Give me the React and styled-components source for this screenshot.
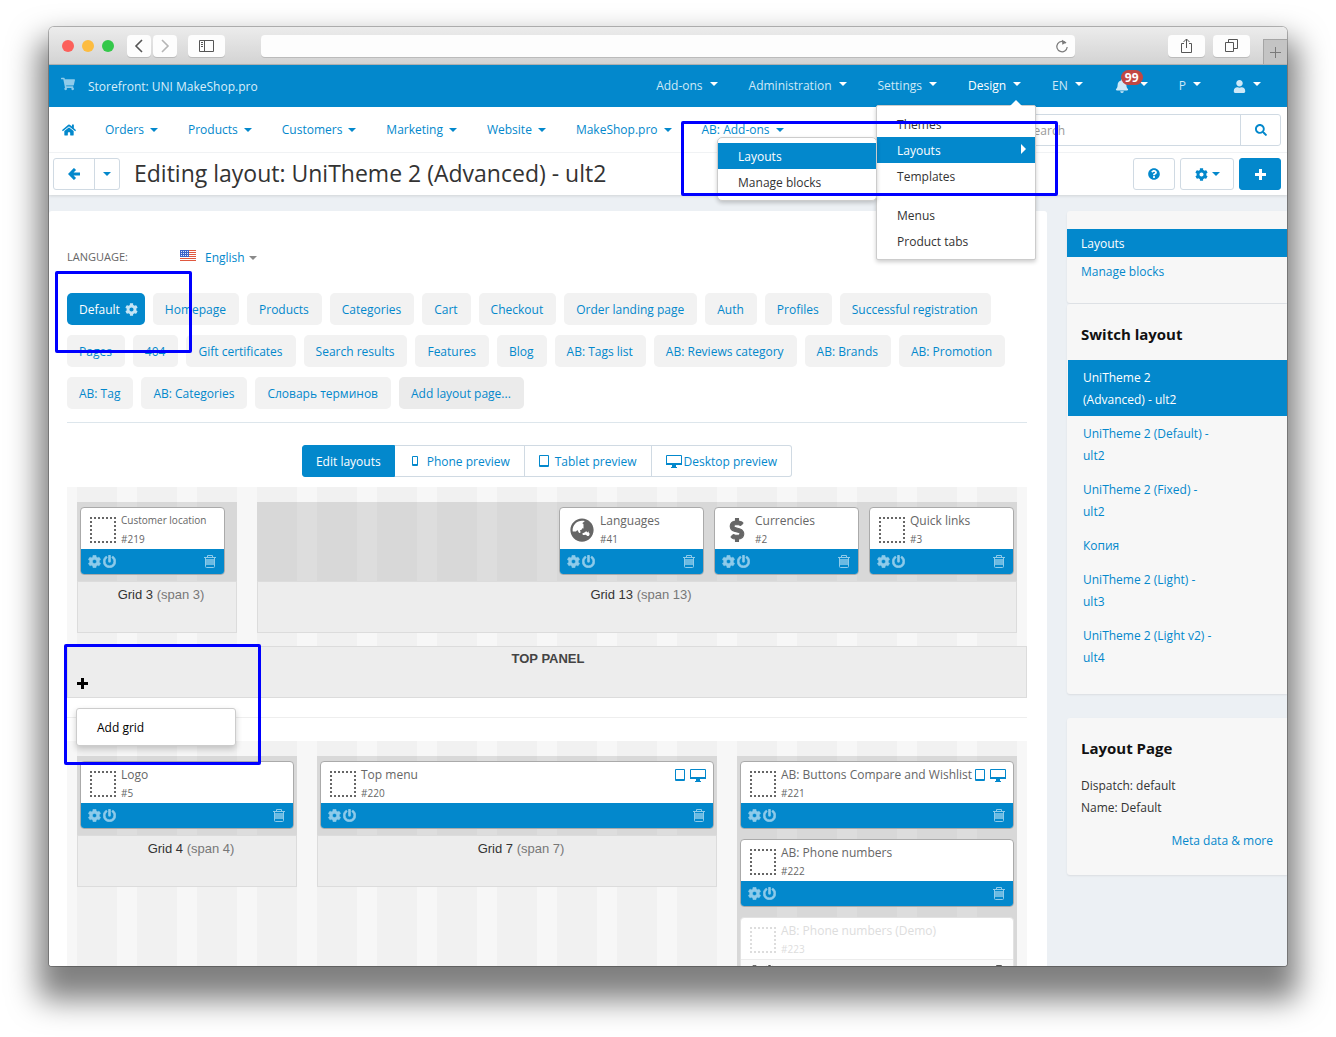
import React from 'react';
import styled, { createGlobalStyle } from 'styled-components';
import {
  FaHome,
  FaShoppingCart,
  FaBell,
  FaUser,
  FaSearch,
  FaQuestionCircle,
  FaCog,
  FaPowerOff,
  FaGlobeAsia,
  FaDollarSign,
} from 'react-icons/fa';

const topMenu = ['Add-ons', 'Administration', 'Settings'];

const mainMenu = [
  'Orders',
  'Products',
  'Customers',
  'Marketing',
  'Website',
  'MakeShop.pro',
  'AB: Add-ons',
];

const layoutPages = [
  'Homepage',
  'Products',
  'Categories',
  'Cart',
  'Checkout',
  'Order landing page',
  'Auth',
  'Profiles',
  'Successful registration',
  'Pages',
  '404',
  'Gift certificates',
  'Search results',
  'Features',
  'Blog',
  'AB: Tags list',
  'AB: Reviews category',
  'AB: Brands',
  'AB: Promotion',
  'AB: Tag',
  'AB: Categories',
  'Словарь терминов',
];

const themes = [
  'UniTheme 2 (Advanced) - ult2',
  'UniTheme 2 (Default) - ult2',
  'UniTheme 2 (Fixed) - ult2',
  'Копия',
  'UniTheme 2 (Light) - ult3',
  'UniTheme 2 (Light v2) - ult4',
];

const topPanelGrids = [
  {
    span: 3,
    footer: true,
    blocks: [{ id: 219, name: 'Customer location', small: true }],
  },
  {
    span: 13,
    footer: true,
    alignRight: true,
    blocks: [
      { id: 41, name: 'Languages', icon: 'globe' },
      { id: 2, name: 'Currencies', icon: 'dollar' },
      { id: 3, name: 'Quick links' },
    ],
  },
];

const headerGrids = [
  { span: 4, footer: true, stacked: true, blocks: [{ id: 5, name: 'Logo' }] },
  {
    span: 7,
    footer: true,
    stacked: true,
    blocks: [{ id: 220, name: 'Top menu', devices: true }],
  },
  {
    span: 5,
    stacked: true,
    blocks: [
      { id: 221, name: 'AB: Buttons Compare and Wishlist', devices: true },
      { id: 222, name: 'AB: Phone numbers' },
      { id: 223, name: 'AB: Phone numbers (Demo)', disabled: true },
    ],
  },
];

export default function App() {
  return (
    <>
      <GlobalStyle />
      <Page>
        <Window>
          <BrowserBar />
          <Header />
          <Body>
            <Content>
              <LanguageSelect />
              <LayoutTabs />
              <Previews />
              <Grids grids={topPanelGrids} />
              <TopPanel />
              <Grids grids={headerGrids} last />
            </Content>
            <Sidebar />
          </Body>
        </Window>
      </Page>
    </>
  );
}

function BrowserBar() {
  return (
    <Chrome>
      <Dots>
        <Dot $color="#fc605b" />
        <Dot $color="#fdbc40" />
        <Dot $color="#34c84a" />
      </Dots>
      <ChromeGroup>
        <ChromeButton $width={24} aria-label="Back">
          <svg width="10" height="14" viewBox="0 0 10 14" fill="none" stroke="#555" strokeWidth="1.6">
            <path d="M8 1 2 7l6 6" />
          </svg>
        </ChromeButton>
        <ChromeButton $width={24} aria-label="Forward">
          <svg width="10" height="14" viewBox="0 0 10 14" fill="none" stroke="#b5b5b5" strokeWidth="1.6">
            <path d="m2 1 6 6-6 6" />
          </svg>
        </ChromeButton>
      </ChromeGroup>
      <ChromeButton $width={37} aria-label="Sidebar">
        <svg width="15" height="12" viewBox="0 0 15 12" fill="none" stroke="#555">
          <path d="M.5.5h14v11H.5zM5.5.5v11M2 2.5h2M2 4.5h2M2 6.5h2" />
        </svg>
      </ChromeButton>
      <Address>
        <AddressInput aria-label="Address" />
        <svg width="14" height="14" viewBox="0 0 14 14" fill="none" stroke="#7a7a7a" strokeWidth="1.2">
          <path d="M11 4.2A5.2 5.2 0 1 0 12.2 8" />
          <path d="M7 .8 11.4 3.6 7.3 5.8z" fill="#7a7a7a" stroke="none" />
        </svg>
      </Address>
      <ChromeGroup $gap={8}>
        <ChromeButton $width={37} aria-label="Share">
          <svg width="13" height="16" viewBox="0 0 13 16" fill="none" stroke="#555">
            <path d="M4 5.5H1.5v9h10v-9H9M6.5 10V1M3.5 4l3-3 3 3" />
          </svg>
        </ChromeButton>
        <ChromeButton $width={37} aria-label="Tabs">
          <svg width="13" height="13" viewBox="0 0 13 13" fill="none" stroke="#555">
            <path d="M.5 3.5h8v9h-8zM3.5 3.5v-3h9v9h-4" />
          </svg>
        </ChromeButton>
      </ChromeGroup>
      <NewTab aria-label="New tab">
        <svg width="11" height="11" viewBox="0 0 11 11" stroke="#7a7a7a">
          <path d="M5.5 0v11M0 5.5h11" />
        </svg>
      </NewTab>
    </Chrome>
  );
}

function Header() {
  return (
    <Top>
      <AdminBar>
        <Storefront href="#storefront">
          <FaShoppingCart size={14} />
          <span>Storefront: UNI MakeShop.pro</span>
        </Storefront>
        <AdminNav>
          {topMenu.map((name) => (
            <AdminItem key={name}>
              {name}
              <Caret />
            </AdminItem>
          ))}
          <DropdownHolder>
            <AdminItem $active>
              Design
              <Caret />
            </AdminItem>
            <DesignMenu />
          </DropdownHolder>
          <AdminItem>
            EN
            <Caret />
          </AdminItem>
          <AdminItem $icon aria-label="Notifications">
            <Bell>
              <FaBell size={14} />
              <Badge>99</Badge>
            </Bell>
            <Caret />
          </AdminItem>
          <AdminItem>
            P
            <Caret />
          </AdminItem>
          <AdminItem $icon aria-label="Account">
            <FaUser size={13} />
            <Caret />
          </AdminItem>
        </AdminNav>
      </AdminBar>
      <MainBar>
        <HomeLink href="#home" aria-label="Home">
          <FaHome size={14} />
        </HomeLink>
        <MainNav>
          {mainMenu.map((name) => (
            <MainItem key={name}>
              {name}
              <Caret />
            </MainItem>
          ))}
        </MainNav>
        <SearchForm>
          <SearchInput type="text" placeholder="Search" aria-label="Search" />
          <SearchButton type="button" aria-label="Find">
            <FaSearch size={12} />
          </SearchButton>
        </SearchForm>
      </MainBar>
      <TitleBar>
        <BackGroup>
          <BackButton aria-label="Back">
            <svg width="12" height="12" viewBox="0 0 12 12" fill="none" stroke="currentColor" strokeWidth="3">
              <path d="M7 1 2 6l5 5M2 6h10" />
            </svg>
          </BackButton>
          <BackMore aria-label="Last viewed">
            <Caret $flush />
          </BackMore>
        </BackGroup>
        <Title>Editing layout: UniTheme 2 (Advanced) - ult2</Title>
        <ToolButton aria-label="Help">
          <FaQuestionCircle size={12} />
        </ToolButton>
        <ToolButton $wide aria-label="Settings">
          <FaCog size={13} />
          <Caret $tight />
        </ToolButton>
        <ToolButton $primary aria-label="Add">
          <PlusIcon />
        </ToolButton>
      </TitleBar>
      <Highlight $top={56} $right={229} $width={377} $height={75} />
    </Top>
  );
}

function PlusIcon() {
  return (
    <svg width="11" height="11" viewBox="0 0 11 11" fill="none" stroke="currentColor" strokeWidth="3">
      <path d="M5.5 0v11M0 5.5h11" />
    </svg>
  );
}

function DesignMenu() {
  return (
    <Menu>
      <Arrow />
      <MenuLink href="#themes">Themes</MenuLink>
      <SubmenuHolder>
        <MenuLink href="#layouts" $active>
          Layouts
          <ArrowRight />
        </MenuLink>
        <Submenu>
          <MenuLink href="#layouts" $active>
            Layouts
          </MenuLink>
          <MenuLink href="#blocks">Manage blocks</MenuLink>
        </Submenu>
      </SubmenuHolder>
      <MenuLink href="#templates">Templates</MenuLink>
      <MenuGap />
      <MenuLink href="#menus">Menus</MenuLink>
      <MenuLink href="#tabs">Product tabs</MenuLink>
    </Menu>
  );
}

function LanguageSelect() {
  return (
    <LanguageRow>
      <LanguageLabel id="language">Language:</LanguageLabel>
      <LanguageButton aria-labelledby="language">
        <Flag />
        English
        <Caret $tight $grey />
      </LanguageButton>
    </LanguageRow>
  );
}

function Flag() {
  return (
    <svg width="16" height="11" viewBox="0 0 16 11">
      <rect width="16" height="11" fill="#fff" />
      <path d="M0 .5h16M0 2.5h16M0 4.5h16M0 6.5h16M0 8.5h16M0 10.5h16" stroke="#e0583f" />
      <rect width="9" height="7" fill="#3b62c8" />
      <path d="M1 1.5h7M1 3.5h7M1 5.5h7" stroke="#dfe7fa" strokeDasharray="1 1" />
    </svg>
  );
}

function LayoutTabs() {
  return (
    <Tabs>
      <Tab href="#default" $active>
        Default
        <FaCog size={13} />
      </Tab>
      {layoutPages.map((name) => (
        <Tab key={name} href="#page">
          {name}
        </Tab>
      ))}
      <Tab href="#add" $add>
        Add layout page...
      </Tab>
      <Highlight $top={-22} $left={-12} $width={137} $height={82} />
    </Tabs>
  );
}

function Previews() {
  return (
    <PreviewRow>
      <Preview $active>Edit layouts</Preview>
      <Preview>
        <DeviceIcon type="phone" />
        Phone preview
      </Preview>
      <Preview>
        <DeviceIcon type="tablet" />
        Tablet preview
      </Preview>
      <Preview $close>
        <DeviceIcon type="desktop" />
        Desktop preview
      </Preview>
    </PreviewRow>
  );
}

function DeviceIcon({ type }) {
  if (type === 'desktop') {
    return (
      <svg width="16" height="13" viewBox="0 0 16 13" fill="#0388cc">
        <path d="M1 0h14a1 1 0 0 1 1 1v9H0V1a1 1 0 0 1 1-1zm0 1v7h14V1z" fillRule="evenodd" />
        <path d="M6 10h4v2h1v1H5v-1h1z" />
      </svg>
    );
  }
  if (type === 'tablet') {
    return (
      <svg width="10" height="12" viewBox="0 0 10 12" fill="#0388cc">
        <path d="M1 0h8a1 1 0 0 1 1 1v10a1 1 0 0 1-1 1H1a1 1 0 0 1-1-1V1a1 1 0 0 1 1-1zm0 1v9h8V1z" fillRule="evenodd" />
      </svg>
    );
  }
  return (
    <svg width="12" height="10" viewBox="0 0 12 10" fill="#0388cc">
      <path d="M4 0h4a1 1 0 0 1 1 1v8a1 1 0 0 1-1 1H4a1 1 0 0 1-1-1V1a1 1 0 0 1 1-1zm0 1v7h4V1z" fillRule="evenodd" />
    </svg>
  );
}

function Grids({ grids, last }) {
  return (
    <GridContainer $last={last}>
      {grids.map((grid) => (
        <Grid key={grid.span} $span={grid.span}>
          <GridBlocks $stacked={grid.stacked} $right={grid.alignRight}>
            {grid.blocks.map((block) => (
              <GridBlock key={block.id} block={block} stacked={grid.stacked} />
            ))}
          </GridBlocks>
          {grid.footer && (
            <GridFooter>
              Grid {grid.span} <span>(span {grid.span})</span>
            </GridFooter>
          )}
        </Grid>
      ))}
    </GridContainer>
  );
}

function BlockIcon({ icon }) {
  if (icon === 'globe') return <FaGlobeAsia size={24} />;
  if (icon === 'dollar') return <FaDollarSign size={24} stroke="currentColor" strokeWidth={24} />;
  return <EmptyIcon />;
}

function GridBlock({ block, stacked }) {
  return (
    <Block $stacked={stacked} $disabled={block.disabled}>
      <BlockHead>
        <BlockPicture>
          <BlockIcon icon={block.icon} />
        </BlockPicture>
        <BlockText>
          <BlockName $small={block.small}>{block.name}</BlockName>
          <BlockId>#{block.id}</BlockId>
        </BlockText>
        {block.devices && (
          <Devices>
            <DeviceIcon type="tablet" />
            <DeviceIcon type="desktop" />
          </Devices>
        )}
      </BlockHead>
      <BlockActions $disabled={block.disabled}>
        <ActionButton aria-label="Settings">
          <FaCog size={13} stroke="currentColor" strokeWidth={20} />
        </ActionButton>
        <ActionButton aria-label="Turn off">
          <FaPowerOff size={13} stroke="currentColor" strokeWidth={24} />
        </ActionButton>
        <ActionButton $end aria-label="Delete">
          <TrashIcon />
        </ActionButton>
      </BlockActions>
    </Block>
  );
}

function TrashIcon() {
  return (
    <svg width="12" height="13" viewBox="0 0 12 13" fill="none" stroke="currentColor">
      <path d="M0 2.5h12M3.5 2.5v-2h5v2M1.5 2.5v9a1 1 0 0 0 1 1h7a1 1 0 0 0 1-1v-9" />
      <path d="M2 4h8v6H2z" fill="currentColor" fillOpacity=".75" stroke="none" />
    </svg>
  );
}

function TopPanel() {
  return (
    <>
      <Panel>
        <PanelName>TOP PANEL</PanelName>
        <PanelAdd aria-label="Add">
          <PlusIcon />
        </PanelAdd>
        <AddMenu>
          <AddLink href="#add-grid">Add grid</AddLink>
        </AddMenu>
        <Highlight $top={-3} $left={-4} $width={197} $height={121} />
      </Panel>
      <Divider />
    </>
  );
}

function Sidebar() {
  return (
    <Aside>
      <NavCard>
        <SideLink href="#layouts" $active>
          Layouts
        </SideLink>
        <SideLink href="#blocks">Manage blocks</SideLink>
      </NavCard>
      <ThemesCard>
        <SideTitle $inset>Switch layout</SideTitle>
        {themes.map((name, i) => (
          <ThemeLink key={name} href="#theme" $active={i === 0}>
            {name}
          </ThemeLink>
        ))}
      </ThemesCard>
      <InfoCard>
        <SideTitle>Layout Page</SideTitle>
        <SideText>Dispatch: default</SideText>
        <SideText>Name: Default</SideText>
        <MetaLink href="#meta">Meta data &amp; more</MetaLink>
      </InfoCard>
    </Aside>
  );
}

const GlobalStyle = createGlobalStyle`
  * {
    box-sizing: border-box;
  }

  body {
    margin: 0;
    background: #fff;
    color: #333;
    font-family: 'Open Sans', 'Noto Sans', sans-serif;
    font-size: 12px;
    line-height: 22px;
    overflow: hidden;
  }

  a {
    color: #0388cc;
    text-decoration: none;
  }

  button,
  input {
    margin: 0;
    padding: 0;
    border: none;
    background: none;
    color: inherit;
    font: inherit;
  }

  svg {
    flex: none;
  }
`;

const Page = styled.div`
  height: 100vh;
  padding: 27px 49px 71px;
`;

const Window = styled.div`
  display: flex;
  flex-direction: column;
  height: 100%;
  overflow: hidden;
  border-radius: 5px 5px 3px 3px;
  box-shadow: 0 0 0 1px rgba(0, 0, 0, 0.25), 0 23px 30px 11px rgba(0, 0, 0, 0.5);
`;

const Chrome = styled.div`
  display: flex;
  flex: none;
  align-items: center;
  height: 38px;
  padding-left: 13px;
  border-bottom: 1px solid #b3b3b3;
  background: linear-gradient(#ececec, #d3d3d3);
`;

const Dots = styled.div`
  display: flex;
  gap: 8px;
  margin-right: 13px;
`;

const Dot = styled.span`
  width: 12px;
  height: 12px;
  border-radius: 50%;
  background: ${(props) => props.$color};
`;

const ChromeGroup = styled.div`
  display: flex;
  gap: ${(props) => props.$gap || 2}px;
  margin-right: 11px;
`;

const ChromeButton = styled.button`
  display: flex;
  align-items: center;
  justify-content: center;
  width: ${(props) => props.$width}px;
  height: 22px;
  border-radius: 4px;
  background: #fdfdfd;
  box-shadow: 0 1px 0 #bbb;
`;

const Address = styled.div`
  display: flex;
  flex: 1;
  align-items: center;
  height: 22px;
  margin: 0 93px 0 36px;
  padding-right: 6px;
  border-radius: 4px;
  background: #fdfdfd;
  box-shadow: 0 1px 0 #bbb;
`;

const AddressInput = styled.input`
  flex: 1;
  outline: none;
`;

const NewTab = styled.button`
  display: flex;
  align-items: center;
  justify-content: center;
  align-self: flex-end;
  width: 24px;
  height: 25px;
  margin-left: 2px;
  border: 1px solid #a5a5a5;
  border-width: 1px 0 0 1px;
  background: #c4c4c4;
`;

const Top = styled.header`
  position: relative;
  z-index: 1;
  flex: none;
  background: #fff;
  box-shadow: 0 1px 3px rgba(0, 0, 0, 0.12);
`;

const AdminBar = styled.div`
  display: flex;
  justify-content: space-between;
  height: 42px;
  padding: 0 11px 2px 12px;
  background: #0388cc;
  color: #cfe9f7;
`;

const Storefront = styled.a`
  display: flex;
  gap: 13px;
  align-items: center;
  padding-top: 4px;
  color: #d9eefa;

  svg {
    margin-bottom: 6px;
    color: #8fcbea;
  }
`;

const AdminNav = styled.nav`
  display: flex;
`;

const AdminItem = styled.button`
  display: flex;
  align-items: center;
  height: 40px;
  padding: 2px 15px 0 ${(props) => (props.$icon ? 17 : 16)}px;
  color: ${(props) => (props.$active ? '#fff' : '#cfe9f7')};
`;

const Caret = styled.span`
  margin-left: ${(props) => (props.$flush ? 0 : props.$tight ? 4 : 6)}px;
  border: 4px solid transparent;
  border-top-color: ${(props) => (props.$grey ? '#8a8a8a' : 'currentColor')};
  border-bottom: none;

  ${AdminItem} & {
    margin: 0 0 5px 7px;
    border-top-color: #fff;
  }
`;

const Bell = styled.span`
  position: relative;
  display: flex;
  margin-right: 4px;
`;

const Badge = styled.span`
  position: absolute;
  top: -9px;
  left: 6px;
  padding: 0 4px;
  border-radius: 8px;
  background: #c14743;
  color: #fff;
  font-size: 12px;
  font-weight: 700;
  line-height: 15px;
`;

const DropdownHolder = styled.div`
  position: relative;
`;

const Menu = styled.div`
  position: absolute;
  z-index: 2;
  top: 100%;
  right: 0;
  width: 160px;
  padding: 5px 0;
  border: 1px solid #ccc;
  border-radius: 2px;
  background: #fff;
  box-shadow: 0 2px 4px rgba(0, 0, 0, 0.2);
`;

const Arrow = styled.span`
  position: absolute;
  top: -6px;
  right: 13px;
  border: 6px solid transparent;
  border-top: none;
  border-bottom-color: #fff;
`;

const SubmenuHolder = styled.div`
  position: relative;
`;

const Submenu = styled.div`
  position: absolute;
  top: 0;
  right: 100%;
  width: 160px;
  padding: 5px 0;
  border: 1px solid #ccc;
  border-radius: 5px;
  background: #fff;
  box-shadow: 0 2px 4px rgba(0, 0, 0, 0.2);
`;

const MenuLink = styled.a`
  display: flex;
  align-items: center;
  justify-content: space-between;
  height: 26px;
  padding: 2px 9px 0 20px;
  background: ${(props) => (props.$active ? '#0388cc' : 'transparent')};
  color: ${(props) => (props.$active ? '#fff' : '#333')};
`;

const ArrowRight = styled.span`
  margin-bottom: 4px;
  border: 5px solid transparent;
  border-right: none;
  border-left-color: #fff;
`;

const MenuGap = styled.div`
  height: 13px;
`;

const MainBar = styled.div`
  display: flex;
  align-items: center;
  height: 46px;
  padding: 0 6px 0 13px;
  border-bottom: 1px solid #f0f2f4;
  color: #0388cc;
`;

const HomeLink = styled.a`
  display: flex;
  margin-right: 14px;
`;

const MainNav = styled.nav`
  display: flex;
  flex: 1;
`;

const MainItem = styled.button`
  display: flex;
  align-items: center;
  padding: 0 15px;
`;

const SearchForm = styled.form`
  display: flex;
  width: 261px;
  height: 32px;
  border: 1px solid #d0dae3;
  border-radius: 3px;
`;

const SearchInput = styled.input`
  flex: 1;
  min-width: 0;
  padding: 2px 0 0 6px;

  &::placeholder {
    color: #999;
    opacity: 1;
  }
`;

const SearchButton = styled.button`
  display: flex;
  align-items: center;
  justify-content: center;
  width: 40px;
  border-left: 1px solid #d0dae3;
  color: #0388cc;
`;

const TitleBar = styled.div`
  display: flex;
  gap: 5px;
  align-items: center;
  height: 42px;
  padding: 0 6px 0 4px;
`;

const BackGroup = styled.div`
  display: flex;
  width: 67px;
  height: 32px;
  border: 1px solid #d0dae3;
  border-radius: 3px;
  color: #0388cc;
`;

const BackButton = styled.button`
  display: flex;
  flex: 1;
  align-items: center;
  justify-content: center;
`;

const BackMore = styled.button`
  display: flex;
  align-items: center;
  justify-content: center;
  width: 25px;
  border-left: 1px solid #d0dae3;
`;

const Title = styled.h1`
  flex: 1;
  margin: 0 0 0 9px;
  padding-bottom: 2px;
  font-size: 23px;
  font-weight: 400;
  line-height: 32px;
`;

const ToolButton = styled.button`
  display: flex;
  align-items: center;
  justify-content: center;
  width: ${(props) => (props.$wide ? 54 : 42)}px;
  height: 32px;
  border: 1px solid ${(props) => (props.$primary ? '#0388cc' : '#d0dae3')};
  border-radius: 3px;
  background: ${(props) => (props.$primary ? '#0388cc' : '#fff')};
  color: ${(props) => (props.$primary ? '#fff' : '#0388cc')};
`;

const Highlight = styled.div`
  position: absolute;
  z-index: 3;
  top: ${(props) => props.$top}px;
  left: ${(props) => (props.$left ? `${props.$left}px` : 'auto')};
  right: ${(props) => (props.$right ? `${props.$right}px` : 'auto')};
  width: ${(props) => props.$width}px;
  height: ${(props) => props.$height}px;
  border: 3px solid #00f;
  border-radius: 2px;
  pointer-events: none;
`;

const Body = styled.div`
  display: flex;
  flex: 1;
  gap: 20px;
  align-items: stretch;
  min-height: 0;
  padding-top: 16px;
  background: #ecf0f4;
`;

const Content = styled.main`
  flex: 1;
  min-width: 0;
  padding: 35px 20px 0 18px;
  border-radius: 3px 3px 0 0;
  background: #fff;
`;

const LanguageRow = styled.div`
  display: flex;
  align-items: center;
  height: 22px;
`;

const LanguageLabel = styled.span`
  width: 113px;
  color: #666;
  font-size: 11px;
  text-transform: uppercase;
`;

const LanguageButton = styled.button`
  display: flex;
  align-items: center;
  padding-top: 2px;
  color: #0388cc;

  svg {
    margin: 0 9px 6px 0;
  }
`;

const Tabs = styled.nav`
  position: relative;
  display: flex;
  flex-wrap: wrap;
  gap: 10px 8px;
  margin-top: 25px;
  padding-bottom: 13px;
  border-bottom: 1px solid #dde6ec;
`;

const Tab = styled.a`
  display: flex;
  gap: 5px;
  align-items: center;
  height: 32px;
  padding: 2px ${(props) => (props.$active ? 7 : 13)}px 0 12px;
  border-radius: 5px;
  background: ${(props) => (props.$active ? '#0388cc' : props.$add ? '#ebebeb' : '#f2f2f2')};
  color: ${(props) => (props.$active ? '#fff' : '#0388cc')};

  svg {
    margin-bottom: 2px;
    color: #c4e4f5;
  }
`;

const PreviewRow = styled.div`
  display: flex;
  justify-content: center;
  margin: 22px 0 10px;
`;

const Preview = styled.button`
  display: flex;
  gap: ${(props) => (props.$close ? 2 : 6)}px;
  align-items: center;
  height: 32px;
  padding: 2px 14px 0;
  border: 1px solid ${(props) => (props.$active ? '#0388cc' : '#d0dae3')};
  border-left-width: ${(props) => (props.$active ? 1 : 0)}px;
  background: ${(props) => (props.$active ? '#0388cc' : '#fff')};
  color: ${(props) => (props.$active ? '#fff' : '#0388cc')};

  svg {
    margin-bottom: 2px;
  }

  &:first-child {
    padding: 2px 13px 0;
    border-radius: 3px 0 0 3px;
  }

  &:last-child {
    border-radius: 0 3px 3px 0;
  }
`;

const GridContainer = styled.section`
  display: grid;
  grid-template-columns: repeat(16, 1fr);
  align-items: start;
  min-height: ${(props) => (props.$last ? 400 : 0)}px;
  padding: 15px 0 13px;
  background: linear-gradient(
      90deg,
      #f7f7f7 10px,
      #f1f1f1 10px,
      #f1f1f1 calc(100% - 10px),
      #f7f7f7 calc(100% - 10px)
    )
    0 0 / 6.25% 100%;
`;

const Grid = styled.div`
  grid-column: span ${(props) => props.$span};
  min-width: 0;
  margin: 0 10px;
  background: rgba(0, 0, 0, 0.1);
`;

const GridBlocks = styled.div`
  display: flex;
  flex-direction: ${(props) => (props.$stacked ? 'column' : 'row')};
  gap: 10px;
  justify-content: ${(props) => (props.$right ? 'flex-end' : 'flex-start')};
  padding: 5px 3px 6px;
`;

const GridFooter = styled.div`
  height: 52px;
  padding: 2px 0 0 8px;
  border: 1px solid #dcdcdc;
  background: #ededed;
  font-family: 'Liberation Sans', Arial, sans-serif;
  font-size: 13px;
  text-align: center;

  span {
    color: #777;
  }
`;

const Block = styled.article`
  width: ${(props) => (props.$stacked ? 'auto' : '145px')};
  height: 68px;
  overflow: hidden;
  border: 1px solid ${(props) => (props.$disabled ? '#e2e2e2' : '#aaa')};
  border-radius: 4px;
  background: #fff;
  color: ${(props) => (props.$disabled ? '#ddd' : '#666')};
`;

const BlockHead = styled.div`
  display: flex;
  height: 41px;
  padding: 0 7px 0 9px;
`;

const BlockPicture = styled.span`
  display: flex;
  flex: none;
  align-items: center;
  justify-content: center;
  width: 26px;
  height: 44px;
  margin-right: 5px;
`;

const EmptyIcon = styled.i`
  width: 26px;
  height: 26px;
  border: 2px dotted currentColor;
`;

const BlockText = styled.div`
  flex: 1;
  min-width: 0;
  padding-top: 4px;
  line-height: 18px;
  white-space: nowrap;
`;

const BlockName = styled.div`
  height: 18px;
  font-size: ${(props) => (props.$small ? 10 : 12)}px;
  line-height: ${(props) => (props.$small ? 16 : 18)}px;
`;

const BlockId = styled.div`
  font-size: 10px;
`;

const Devices = styled.span`
  display: flex;
  gap: 5px;
  align-items: center;
  height: 26px;
`;

const BlockActions = styled.div`
  display: flex;
  gap: 2px;
  align-items: center;
  height: 26px;
  padding: 0 8px 2px 7px;
  border-top: 1px solid ${(props) => (props.$disabled ? '#ececec' : '#0388cc')};
  background: ${(props) => (props.$disabled ? '#f9f9f9' : '#0388cc')};
  color: ${(props) => (props.$disabled ? '#555' : '#8fcbea')};
`;

const ActionButton = styled.button`
  display: flex;
  margin-left: ${(props) => (props.$end ? 'auto' : 0)};
`;

const Panel = styled.div`
  position: relative;
  height: 52px;
  border: 1px solid #dcdcdc;
  background: #ededed;
`;

const PanelName = styled.h2`
  margin: 0;
  padding: 1px 0 0 2px;
  font-family: 'Liberation Sans', Arial, sans-serif;
  color: #444;
  font-size: 13px;
  font-weight: 700;
  text-align: center;
`;

const PanelAdd = styled.button`
  display: flex;
  margin: 8px 0 0 9px;
  color: #000;
`;

const AddMenu = styled.div`
  position: absolute;
  z-index: 2;
  top: 61px;
  left: 8px;
  width: 160px;
  padding: 5px 0;
  border: 1px solid #ccc;
  border-radius: 3px;
  background: #fff;
  box-shadow: 0 3px 6px rgba(0, 0, 0, 0.2);
`;

const AddLink = styled.a`
  display: block;
  padding: 3px 20px 1px;
  color: #000;
`;

const Divider = styled.hr`
  margin: 19px 0 23px;
  border: none;
  border-top: 1px solid #eee;
`;

const Aside = styled.aside`
  width: 220px;
`;

const SideCard = styled.section`
  border-radius: 3px 0 0 3px;
  background: #f7f7f7;
  box-shadow: 0 1px 2px rgba(0, 0, 0, 0.08);
`;

const NavCard = styled(SideCard)`
  margin-bottom: 1px;
  padding: 18px 0;
`;

const ThemesCard = styled(SideCard)`
  margin-bottom: 24px;
  padding: 19px 0 20px;
`;

const InfoCard = styled(SideCard)`
  padding: 19px 14px 23px;
`;

const SideLink = styled.a`
  display: block;
  padding: 4px 14px 2px;
  background: ${(props) => (props.$active ? '#0388cc' : 'transparent')};
  color: ${(props) => (props.$active ? '#fff' : '#0388cc')};
`;

const SideTitle = styled.h3`
  margin: 0;
  padding: 0 0 ${(props) => (props.$inset ? '15px 14px' : '16px 0')};
  color: #111;
  font-size: 15px;
  font-weight: 700;
  line-height: 22px;
`;

const ThemeLink = styled.a`
  display: block;
  margin-left: 1px;
  padding: 7px 73px 5px 15px;
  background: ${(props) => (props.$active ? '#0388cc' : 'transparent')};
  color: ${(props) => (props.$active ? '#fff' : '#0388cc')};
`;

const SideText = styled.p`
  margin: 0;
`;

const MetaLink = styled.a`
  display: block;
  margin-top: 11px;
  text-align: right;
`;
